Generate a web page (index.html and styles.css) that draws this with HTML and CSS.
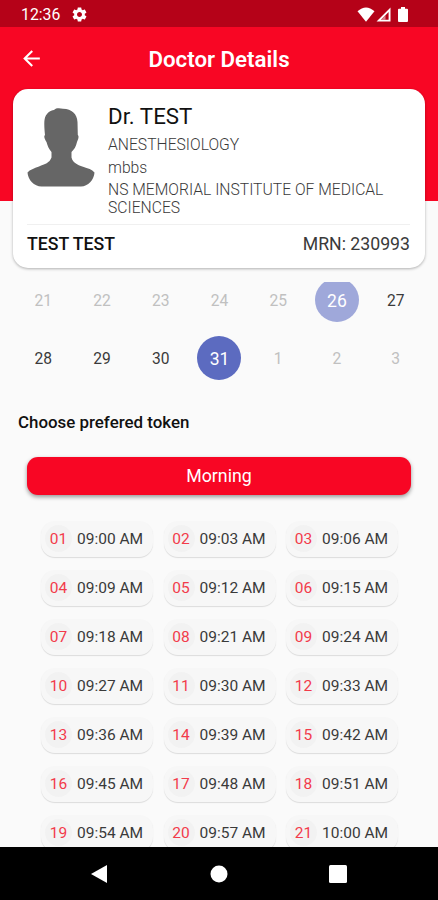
FILE: index.html
```html
<!DOCTYPE html>
<html lang="en">
<head>
    <meta charset="UTF-8">
    <meta name="viewport" content="width=device-width, initial-scale=1.0">
    <title>Doctor Details</title>
    <link rel="stylesheet" href="styles.css">
</head>
<body>
    <div class="status-bar">
        <span class="clock">12:36</span>
        <svg class="gear" viewBox="0 0 24 24"><path d="M19.43 12.98c.04-.32.07-.64.07-.98s-.03-.66-.07-.98l2.11-1.65c.19-.15.24-.42.12-.64l-2-3.46c-.12-.22-.39-.3-.61-.22l-2.49 1c-.52-.4-1.08-.73-1.69-.98l-.38-2.65C14.46 2.18 14.25 2 14 2h-4c-.25 0-.46.18-.49.42l-.38 2.65c-.61.25-1.17.59-1.69.98l-2.49-1c-.23-.09-.49 0-.61.22l-2 3.46c-.13.22-.07.49.12.64l2.11 1.65c-.04.32-.07.65-.07.98s.03.66.07.98l-2.11 1.65c-.19.15-.24.42-.12.64l2 3.46c.12.22.39.3.61.22l2.49-1c.52.4 1.08.73 1.69.98l.38 2.65c.03.24.24.42.49.42h4c.25 0 .46-.18.49-.42l.38-2.65c.61-.25 1.17-.59 1.69-.98l2.49 1c.23.09.49 0 .61-.22l2-3.46c.12-.22.07-.49-.12-.64l-2.11-1.65zM12 15.5c-1.93 0-3.5-1.57-3.5-3.5s1.57-3.5 3.5-3.5 3.5 1.57 3.5 3.5-1.57 3.5-3.5 3.5z"/></svg>
        <div class="status-icons">
            <svg width="18" height="15" viewBox="0 0 18 15"><path d="M0.5 4.2Q9-3.4 17.5 4.2L9 14.8z"/></svg>
            <svg width="15" height="15" viewBox="0 0 15 15"><path fill-rule="evenodd" d="M14.5 0.5v14H0.5zM12.6 5v7.7H5z"/><path class="signal-fill" d="M9.5 8v5H5z"/></svg>
            <svg class="battery" width="10" height="15" viewBox="0 0 10 15"><path d="M3 0h4v1.8h2q1 0 1 1V14q0 1-1 1H1q-1 0-1-1V2.8q0-1 1-1h2z"/></svg>
        </div>
    </div>
    <div class="content">
        <div class="app-bar">
            <svg class="back" viewBox="0 0 24 24"><path d="M20 11H7.83l5.59-5.59L12 4l-8 8 8 8 1.41-1.41L7.83 13H20v-2z"/></svg>
            <h1>Doctor Details</h1>
        </div>
        <div class="card">
            <div class="doctor">
                <svg class="avatar" viewBox="0 0 68 79"><path d="M17.5 12C18.500 5 23.500 2.500 27 2C29 -0.200 33 0.200 36 0.800C45 1 50 6 50.500 14L50.800 27C52.200 28 51.400 31 50 34C49 39 47 41.500 44.500 44V49.500C46 55 50 56.500 56 58.800C61 60.500 65 61.500 67.500 64.500C67 72 61 78.500 54 78.500H14.500C7 78.500 1 72 0.500 64.500C3 61.500 7 60.500 12 58.500C18 56 22.500 55 24.500 49.500V44C22 41 20.500 38 19.500 34C17.500 31 16.500 28 18 27C17.500 22 17 16 17.500 12z"/></svg>
                <div class="doctor-info">
                    <h2>Dr. TEST</h2>
                    <p>ANESTHESIOLOGY</p>
                    <p>mbbs</p>
                    <p class="hospital">NS MEMORIAL INSTITUTE OF MEDICAL SCIENCES</p>
                </div>
            </div>
            <div class="patient">
                <span class="patient-name">TEST TEST</span>
                <span>MRN: 230993</span>
            </div>
        </div>
        <div class="calendar">
            <span class="day disabled">21</span>
            <span class="day disabled">22</span>
            <span class="day disabled">23</span>
            <span class="day disabled">24</span>
            <span class="day disabled">25</span>
            <span class="day today">26</span>
            <span class="day">27</span>
            <span class="day">28</span>
            <span class="day">29</span>
            <span class="day">30</span>
            <span class="day selected">31</span>
            <span class="day disabled">1</span>
            <span class="day disabled">2</span>
            <span class="day disabled">3</span>
        </div>
        <h3>Choose prefered token</h3>
        <button class="session">Morning</button>
        <div class="tokens">
            <div class="token"><span class="number">01</span>09:00 AM</div>
            <div class="token"><span class="number">02</span>09:03 AM</div>
            <div class="token"><span class="number">03</span>09:06 AM</div>
            <div class="token"><span class="number">04</span>09:09 AM</div>
            <div class="token"><span class="number">05</span>09:12 AM</div>
            <div class="token"><span class="number">06</span>09:15 AM</div>
            <div class="token"><span class="number">07</span>09:18 AM</div>
            <div class="token"><span class="number">08</span>09:21 AM</div>
            <div class="token"><span class="number">09</span>09:24 AM</div>
            <div class="token"><span class="number">10</span>09:27 AM</div>
            <div class="token"><span class="number">11</span>09:30 AM</div>
            <div class="token"><span class="number">12</span>09:33 AM</div>
            <div class="token"><span class="number">13</span>09:36 AM</div>
            <div class="token"><span class="number">14</span>09:39 AM</div>
            <div class="token"><span class="number">15</span>09:42 AM</div>
            <div class="token"><span class="number">16</span>09:45 AM</div>
            <div class="token"><span class="number">17</span>09:48 AM</div>
            <div class="token"><span class="number">18</span>09:51 AM</div>
            <div class="token"><span class="number">19</span>09:54 AM</div>
            <div class="token"><span class="number">20</span>09:57 AM</div>
            <div class="token"><span class="number">21</span>10:00 AM</div>
        </div>
    </div>
    <div class="nav-bar">
        <svg viewBox="0 0 18 20"><path d="M17 1v18L1 10z"/></svg>
        <svg viewBox="0 0 18 20"><circle cx="9" cy="10" r="8.500"/></svg>
        <svg viewBox="0 0 18 20"><rect x="0" y="1" width="18" height="18" rx="1.500"/></svg>
    </div>
</body>
</html>
```
FILE: styles.css
```css
*{
    box-sizing: border-box;
    margin: 0;
}
body{
    display: flex;
    flex-direction: column;
    height: 900px;
    overflow: hidden;
    font-family: Roboto, sans-serif;
    background-color: #fafafa;
    color: #3a3a3a;
}
.status-bar{
    display: flex;
    align-items: center;
    flex: none;
    height: 27px;
    padding: 2px 30px 0 21px;
    background-color: #b50218;
    color: white;
}
.status-bar svg, .back, .nav-bar svg{
    fill: white;
}
.clock{
    width: 50px;
    font-size: 15.8px;
}
.gear{
    width: 17px;
    height: 17px;
}
.status-icons{
    display: flex;
    align-items: center;
    margin-left: auto;
    gap: 1px;
}
.status-icons .signal-fill{
    fill: #d9808b;
}
.battery{
    margin-left: 6px;
}
.content{
    flex: 1;
    min-height: 0;
    overflow: hidden;
    background: linear-gradient(#f80624 174px, #fafafa 174px);
}
.app-bar{
    display: flex;
    align-items: center;
    height: 62px;
    padding: 1px 20px 0 19px;
    color: white;
}
.back{
    width: 25px;
    height: 25px;
}
.app-bar h1{
    flex: 1;
    padding-right: 24px;
    text-align: center;
    font-size: 22.3px;
    font-weight: 600;
}
.card{
    height: 179px;
    margin: 0 13px;
    padding: 13px 15px 0 14px;
    border-radius: 15px;
    background-color: white;
    box-shadow: 0 1px 3px rgba(0, 0, 0, 0.3);
}
.doctor{
    display: flex;
    gap: 13px;
    height: 123px;
    border-bottom: 1px solid #f0f0f0;
}
.avatar{
    flex: none;
    width: 68px;
    height: 79px;
    margin-top: 6px;
    fill: #666;
}
.doctor-info h2{
    margin-bottom: 5px;
    font-size: 22.3px;
    font-weight: 400;
    line-height: 28px;
    color: #111;
}
.doctor-info p{
    margin-top: 3px;
    font-size: 15.7px;
    line-height: 20px;
    font-weight: 300;
}
.doctor-info .hospital{
    line-height: 18px;
}
.patient{
    display: flex;
    justify-content: space-between;
    padding-top: 9px;
    font-size: 17.7px;
}
.patient-name{
    color: #111;
    font-weight: 500;
}
.calendar{
    display: grid;
    grid-template-columns: repeat(7, 1fr);
    grid-auto-rows: 44px;
    row-gap: 14px;
    justify-items: center;
    align-content: end;
    height: 98px;
    margin: 14px 13px 0 14px;
    overflow: hidden;
}
.day{
    width: 44px;
    border-radius: 50%;
    line-height: 46px;
    text-align: center;
    font-size: 15.6px;
}
.disabled{
    color: #c0c0c0;
}
.today, .selected{
    color: white;
    font-size: 17.5px;
}
.today{
    background-color: #9fa8da;
}
.selected{
    background-color: #5c6bc0;
}
h3{
    margin: 32px 18px 0;
    font-size: 16.9px;
    font-weight: 500;
    line-height: 20px;
    color: #111;
}
.session{
    display: block;
    width: 384px;
    height: 38px;
    margin: 25px 27px 0;
    padding-bottom: 2px;
    border: none;
    border-radius: 11px;
    font-family: inherit;
    font-size: 17.8px;
    font-weight: 400;
    background-color: #f80624;
    color: white;
    box-shadow: 0 2px 4px rgba(0, 0, 0, 0.4);
}
.tokens{
    display: grid;
    grid-template-columns: repeat(3, 112px);
    grid-auto-rows: 36px;
    gap: 13px 10.5px;
    margin: 26px 0 0 41px;
}
.token{
    display: flex;
    align-items: center;
    gap: 5px;
    padding: 0 0 1px 4px;
    border-radius: 14px;
    background-color: #f7f7f7;
    box-shadow: 0 1px 1px rgba(0, 0, 0, 0.12);
    font-size: 15.5px;
    white-space: nowrap;
}
.number{
    width: 27px;
    height: 27px;
    border-radius: 50%;
    line-height: 28px;
    text-align: center;
    background-color: #f2f2f2;
    color: #f23b4b;
}
.nav-bar{
    display: flex;
    justify-content: space-between;
    align-items: center;
    flex: none;
    height: 53px;
    padding: 0 91px 0 90px;
    background-color: black;
}
.nav-bar svg{
    width: 18px;
    height: 20px;
}
```
